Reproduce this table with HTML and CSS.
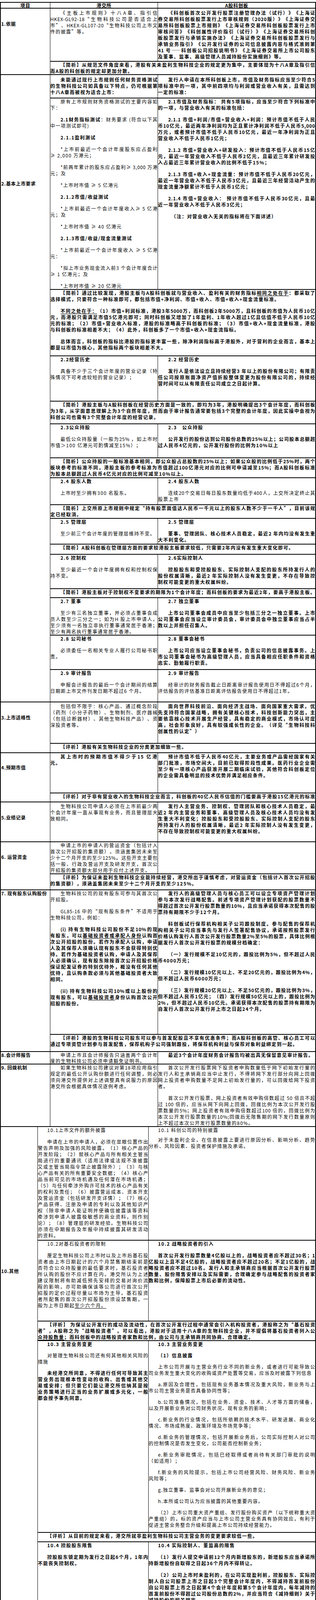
FILE: index.html
```html
<!DOCTYPE html>
<html lang="zh-CN">
<head>
<meta charset="utf-8">
<title>港交所与A股科创板比较</title>
<link rel="stylesheet" href="styles.css">
</head>
<body>
<div class="page">
<div class="grid ga">
  <div class="hd">项目</div><div class="hd">港交所</div><div class="hd">A股科创板</div>

  <div class="lb s2 p31">1.依据</div>
  <div class="c pt3"><p><span>《主板上市规则》十八A章、指引信</span><span>HKEX-GL92-18“生物科技公司是否适合上</span><span>市”、HKEX-GL107-20“生物科技公司上市文</span><span class="z">件的披露”等。</span></p></div>
  <div class="c pt3 bd"><p><span>《科创板首次公开发行股票注册管理办法（试行）》《上海证</span><span>券交易所科创板股票发行上市审核规则（2020版）》《上海证券交</span><span>易所科创板股票上市规则》《上海证券交易所科创板股票发行上市</span><span>审核问答》《科创属性评价指引（试行）》《上海证券交易所科创</span><span>板股票发行与承销实施办法》《上海证券交易所科创板股票发行与</span><span>承销业务指引》《公开发行证券的公司信息披露内容与格式准则第</span><span>41 号——科创板公司招股说明书》《上海证券交易所上市公司股东</span><span class="z">及董事、监事、高级管理人员减持股份实施细则》等。</span></p></div>
  <div class="c an w2"><p><span>【简析】从规范文件角度来看，港股有关未盈利生物科技企业的规定更为集中，主要体现为十八A章及指引信</span><span class="z">而A股的科创板的规定却更加分散。</span></p></div>

  <div class="lb s16 p270">2.基本上市要求</div>
  <div class="c pt4 bd"><p><span>未能通过现行上市规则任何财务资格测试</span><span>的生物科技公司如具备以下特点，仍可根据第</span><span class="z">十八A章而被视为适合上市：</span></p></div>
  <div class="c pt4 bd"><p><span>发行人申请在本所科创板上市，市值及财务指标应当至少符合5</span><span>项标准中的一项，其中前四项均与利润或营业收入有关，且需达到</span><span class="z">一定的标准：</span></p></div>

  <div class="c">
    <p><span>原有上市规则财务资格测试的主要内容如</span><span class="z">下：</span></p>
    <p><span><b>2.1财务指标测试</b>：财务要求 (符合以下其</span><span class="z">中一项测试即可)</span></p>
    <p><b>2.1.1盈利测试</b></p>
    <p><span>*上市前最近一个会计年度股东应占盈利</span><span class="z">≥ 2,000 万港元；</span></p>
    <p><span>*前两年累计的股东应占盈利≥ 3,000 万港</span><span class="z">元；及</span></p>
    <p>*上市时市值 ≥ 5 亿港元</p>
    <p><b>2.1.2市值/收益测试</b></p>
    <p><span>*上市前最近一个会计年度收入≥ 5 亿港</span><span class="z">元；及</span></p>
    <p>*上市时市值 ≥ 40 亿港元</p>
    <p><b>2.1.3市值/收益/现金流量测试</b></p>
    <p><span>*上市前最近一个会计年度收入 ≥ 5 亿港</span><span class="z">元：</span></p>
    <p><span>*拟上市业务现金流入前3 个会计年度合计</span><span class="z">≥ 1 亿港元；及</span></p>
    <p>*上市时市值 ≥ 20 亿港元</p>
  </div>
  <div class="c bd">
    <p><span>2.1市值及财务指标： 共有5项指标，应当至少符合下列标准中</span><span class="z">的一项，与营业收入有关的标准包括：</span></p>
    <p><span>2.1.1 市值+利润/市值+营业收入+利润：预计市值不低于人民</span><span>币10亿元，最近两年净利润均为正且累计净利润不低于人民币5,000</span><span>万元，或者预计市值不低于人民币10亿元，最近一年净利润为正且</span><span class="z">营业收入不低于人民币1亿元；</span></p>
    <p><span>2.1.2 市值+营业收入+研发投入：预计市值不低于人民币15亿</span><span>元，最近一年营业收入不低于人民币2亿元，且最近三年累计研发投</span><span class="z">入占最近三年累计营业收入的比例不低于15%；</span></p>
    <p><span>2.1.3 市值+收入+现金流量：预计市值不低于人民币20亿元，</span><span>最近一年营业收入不低于人民币3亿元，且最近三年经营活动产生的</span><span class="z">现金流量净额累计不低于人民币1亿元；</span></p>
    <p><span>2.1.4 市值+营业收入： 预计市值不低于人民币30亿元，且最</span><span class="z">近一年营业收入不低于人民币3亿元；</span></p>
    <p class="note">（注：对营业收入无关的指标将在下面详述）</p>
  </div>

  <div class="c an w2">
    <p><span>【简析】通过比较发现，港股主板与A股科创板就与营业收入、盈利有关的财务指标<u>相同之处在于</u>：都采取了</span><span class="z">选择模式，只要符合一种标准即可，都包括市值+净利润、市值+收入、市值+收入+现金流量标准。</span></p>
    <p><span><u>不同之处在于：</u>（1）市值+利润标准，港股3年5000万，而科创板2年5000万，且科创板的市值为人民币10亿</span><span>元，而港股只需满足市值5亿港元即可；同时科创板又增加了1年盈利、1年收入超过1亿且估值不低于人民币10亿</span><span>元的标准；（2）市值+营业收入标准，港股的标准略高于科创板的标准；（3）市值+收入+现金流量标准，港股</span><span class="z">与科创板的标准相差不大；（4）此外，科创板多了一个市值+收入+现金流指标。</span></p>
    <p><span>总体而言，科创板的指标比港股的指标更丰富一些，除净利润指标高于港股外，对于营利的企业而言，基本上</span><span class="z">都是以市值为核心，其他指标两个板块相差不大。</span></p>
  </div>

  <div class="c"><p><b>2.2经营历史</b></p><p><span>具备不少于三个会计年度的营业记录（特</span><span class="z">殊情况下可考虑较短的营业记录）；</span></p></div>
  <div class="c bd"><p>2.2 经营历史</p><p><span>发行人是依法设立且持续经营3 年以上的股份有限公司；有限责</span><span>任公司按原账面净资产值折股整体变更为股份有限公司的，持续经</span><span class="z">营时间可以从有限责任公司成立之日起计算。</span></p></div>
  <div class="c an w2"><p><span>【简析】港股主板与A股科创板在经营历史方面是一致的，即均为3年，港股明确提出3个会计年度，而科创板</span><span>为3年，从字面意思理解上为3个自然年度，然而由于审计报告通常要包括3个完整的会计年度，因此实操中会视为</span><span class="z">科创公司也需有3个完整会计年度的经营记录。</span></p></div>

  <div class="c"><p><b>2.3公众持股</b></p><p><span>最低公众持股量（一般为25% ，如上市时</span><span class="z">市值＞100 亿港元可酌情减至15%）；</span></p></div>
  <div class="c bd"><p>2.3　公众持股</p><p><span>公开发行的股份达到公司股份总数的25%以上；公司股本总额超</span><span class="z">过人民币4亿元的，公开发行股份的比例为10%以上</span></p></div>
  <div class="c an w2"><p><span>【简析】公众持股的一般标准基本相同，即公众股占总股数的25%以上；如果公众股的比例低于25%时，两个</span><span>板块参考的标准不同，港股主板的参考标准为市值超过100亿港元对应的比例可申请减至15%；而A股科创板标准</span><span class="z">为股本总额超过人民币4亿元对应的比例可减至10%以上。</span></p></div>

  <div class="c"><p><b>2.4 股东人数</b></p><p>上市时至少拥有300 名股东。</p></div>
  <div class="c"><p><b>2.4 股东人数</b></p><p><span>连续20个交易日每日股东数量均低于400人，上交所决定终止其</span><span class="z">股票上市</span></p></div>
  <div class="c an w2"><p><span>【简析】上交所原上市规则中规定“持有股票面值达人民币一千元以上的股东人数不少于一千人”，目前该规</span><span class="z">定已经取消。</span></p></div>

  <div class="c"><p><b>2.5 管理层</b></p><p>至少前三个会计年度的管理层维持不变。</p></div>
  <div class="c bd"><p>2.5 管理层</p><p><span>董事、管理团队、核心技术人员稳定，最近2 年内均没有发生重</span><span class="z">大不利变化。</span></p></div>
  <div class="c an w2"><p>【简析】A股科创板在管理层方面的要求较港股主板要求较低，只需要2年内没有发生重大变化即可。</p></div>

  <div class="c"><p><b>2.6 控制权</b></p><p><span>至少最近一个会计年度拥有权和控制权保</span><span class="z">持不变。</span></p></div>
  <div class="c bd"><p>2.6实际控制人</p><p><span>控股股东和受控股股东、实际控制人支配的股东所持发行人的</span><span>股份权属清晰，最近2 年实际控制人没有发生变更，不存在导致控</span><span class="z">制权可能变更的重大权属纠纷。</span></p></div>
  <div class="c an w2"><p><span>【简析】港股主板对于控制权不变要求的期限为1个会计年度；而科创板的要求为最近2年，要高于港股主板。</span></p></div>

  <div class="c"><p><b>2.7 董事</b></p><p><span>至少有三名独立董事，并必须占董事会成</span><span>员人数至少三分之一；如为H 股上市申请人，</span><span>至少须有一名独立非执行董事通常居于香港；</span><span class="z">至少有两名执行董事通常居于香港。</span></p></div>
  <div class="c bd"><p>2.7 独立董事</p><p><span>上市公司董事会成员中应当至少包括三分之一独立董事。上市</span><span>公司董事会应当设立审计委员会，审计委员会中独立董事应当占半</span><span class="z">数以上并担任召集人。</span></p></div>

  <div class="c"><p><b>2.8 公司秘书</b></p><p><span>必须委任一名相关专业人履行公司秘书职</span><span class="z">责。</span></p></div>
  <div class="c bd"><p>2.8 董事会秘书</p><p><span>上市公司应当设立董事会秘书，负责公司的信息披露事务。上</span><span>市公司董事会秘书为高级管理人员，应当具备相应任职条件和资格</span><span class="z">忠实、勤勉履行职责。</span></p></div>

  <div class="c"><p><b>2.9 审计报告</b></p><p><span>申报会计报告的最后一个会计期间的结算</span><span class="z">日期距上市文件刊发日期不超过6 个月。</span></p></div>
  <div class="c"><p><b>2.9 审计报告</b></p><p><span>经审计的财务报告截止日距离审计报告使用日不得超过6个月，</span><span class="z">评估报告的评估基准日距离评估报告使用日不得超过1年。</span></p></div>

  <div class="lb s2 p31">3.上市适格性</div>
  <div class="c pt2"><p><span>包括但不限于：核心产品、通过概念阶段</span><span>（药剂（小分子药物）、生物制剂、医疗器械</span><span>（包括诊断器材）、其他生物科技产品）、资</span><span class="z">深投资者等。</span></p></div>
  <div class="c pt2 bd"><p><span>面向世界科技前沿、面向经济主战场、面向国家重大需求。优</span><span>先支持符合国家战略，拥有关键核心技术，科技创新能力突出，主</span><span>要依靠核心技术开展生产经营，具有稳定的商业模式，市场认可度</span><span>高，社会形象良好，具有较强成长性的企业。（详见“生物科技科</span><span class="z">创属性的认定”）</span></p></div>
  <div class="c an w2"><p>【评析】港股有关生物科技企业的分类更加细致一些。</p></div>

  <div class="lb s2 p29">4.预期市值</div>
  <div class="c pt1 bd"><p>其上市时的预期市值不得少于15 亿港元。</p></div>
  <div class="c pt1 bd"><p><span>预计市值不低于人民币40亿元，主要业务或产品需经国家有关</span><span>部门批准，市场空间大，目前已取得阶段性成果。医药行业企业需</span><span>至少有一项核心产品获准开展二期临床试验，其他符合科创板定位</span><span class="z">的企业需具备明显的技术优势并满足相应条件。</span></p></div>
  <div class="c an w2"><p><span>【评析】对于非有营业收入的生物科技企业而言，科创板的40亿人民币估值的门槛要高于港股15亿港元的标准</span></p></div>

  <div class="lb p31">5.业绩记录</div>
  <div class="c pt2"><p><span>生物科技公司申请人必须在上市前最少两</span><span>个会计年度一直从事现有业务，而且管理层大</span><span class="z">致相同。</span></p></div>
  <div class="c pt2 bd"><p><span>发行人主营业务、控制权、管理团队和核心技术人员稳定，最</span><span>近2 年内主营业务和董事、高级管理人员及核心技术人员均没有发</span><span>生重大不利变化；控股股东和受控股股东、实际控制人支配的股东</span><span>所持发行人的股份权属清晰，最近2 年实际控制人没有发生变更，</span><span class="z">不存在导致控制权可能变更的重大权属纠纷。</span></p></div>

  <div class="lb s2 p30">6. 运营资金</div>
  <div class="c"><p><span>申请上市的申请人的营运资金（包括计入</span><span>首次公开招股的集资额），须涵盖集团未来至</span><span>少十二个月开支的至少125%。这些开支主要包</span><span>括一般、行政及营运开支及研发开支，首次公</span><span class="z">开招股的集资额大部分用于应付上述开支。</span></p></div>
  <div class="c"></div>
  <div class="c an w2"><p><span>【评析】为保证未盈利生物科技企业能持续经营，港交所出于谨慎考虑，对营运资金（包括计入首次公开招股</span><span class="z">的集资额），须涵盖集团未来至少十二个月开支的至少125%。</span></p></div>

  <div class="lb s2">7. 现有股东认购股份</div>
  <div class="c">
    <p><span>生物科技公司的现有股东可参与其首次公</span><span class="z">开招股。</span></p>
    <p><span>GL85-16 中的“现有股东条件”不适用于</span><span class="z">生物科技公司，例如：</span></p>
    <p class="bd"><span>(i) 持有生物科技公司股份不足10%的现</span><span>有股东，可以<u>基础投资者或承配人身份</u>认购首</span><span>次公开招股的股份。若作为承配人认购，申请</span><span>人及其保荐人须确认现有股东不会获得特别优</span><span>待。若作为基础投资者认购，申请人及其保荐</span><span>人必须确认，现有股东除按首次公开招股价格</span><span>保证配发证券的特别优待外，概没有任何其他</span><span>优待，且认购条款必须与其他基础投资者大致</span><span class="z">相同。</span></p>
    <p class="bd"><span>(ii) 持有生物科技公司10%或以上股份的</span><span>现有股东，可以<u>基础投资者</u>身份认购首次公开</span><span class="z">招股的股份。</span></p>
  </div>
  <div class="c bd">
    <p><span>发行人的高级管理人员与核心员工可以设立专项资产管理计划</span><span>参与本次发行战略配售。前述专项资产管理计划获配的股票数量不</span><span>得超过首次公开发行股票数量的10%，且应当承诺获得本次配售的股</span><span class="z">票持有期限不少于12个月。</span></p>
    <p><span>科创板试行保荐机构相关子公司跟投制度。参与配售的保荐机</span><span>构相关子公司应当事先与发行人签署配售协议，承诺按照股票发行</span><span>价格认购发行人首次公开发行股票数量2%至5%的股票，具体比例根</span><span class="z">据发行人首次公开发行股票的规模分档确定：</span></p>
    <p><span>（一）发行规模不足10亿元的，跟投比例为5%，但不超过人民</span><span class="z">币4000万元；</span></p>
    <p><span>（二）发行规模10亿元以上、不足20亿元的，跟投比例为4%，</span><span class="z">但不超过人民币6000万元；</span></p>
    <p><span>（三）发行规模20亿元以上、不足50亿元的，跟投比例为3%，</span><span>但不超过人民币1亿元；（四）发行规模50亿元以上的，跟投比例为</span><span>2%，但不超过人民币10亿元。承诺获得本次配售的股票持有期限为</span><span class="z">自发行人首次公开发行并上市之日起24个月。</span></p>
  </div>
  <div class="c an w2"><p><span>【评析】港股的生物科技公司股东可以参与首发配股且不享有优惠条件；而A股科创板的高管、核心员工可以</span><span class="z">通过专项资管计划参与首发配售，保荐机构子公司强制跟投，将保荐机构利益与保荐对象利益绑定到一起。</span></p></div>

  <div class="lb lh15">8.会计师报告</div>
  <div class="c lh15"><p><span>申请上市且会计师报告只涵盖两个会计年</span><span class="z">度的生物科技公司必须申请豁免证明书。</span></p></div>
  <div class="c lh15 bd"><p>最近3个会计年度财务会计报告均被出具无保留意见审计报告。</p></div>

  <div class="lb">9. 回拨机制</div>
  <div class="c"><p><span>如果生物科技公司建议对第18项应用指引</span><span>规定的最低公开认购份额进行任何调整，则必</span><span>须向港交所提供对上述调整具有说服力的原因</span><span class="z">港交所会根据具体情况逐例考虑。</span></p></div>
  <div class="c">
    <p><span>首次公开发行股票网下投资者申购数量低于网下初始发行量的</span><span>发行人和主承销商应当中止发行，不得将网下发行部分向网上回拨</span><span>网上投资者申购数量不足网上初始发行量的，可以回拨给网下投资</span><span class="z">者。</span></p>
    <p><span>首次公开发行股票，网上投资者有效申购倍数超过 50 倍且不超</span><span>过 100 倍的，应当从网下向网上回拨，回拨比例为本次公开发行股</span><span>票数量的5%；网上投资者有效申购倍数超过100 倍的，回拨比例为</span><span>本次公开发行股票数量的10%;回拨后无限售期的网下发行数量原则</span><span class="z">上不超过本次公开发行股票数量的80%。</span></p>
  </div>
</div>

<div class="grid gb">
  <div class="lb s7 p361">10.其他</div>
  <div class="c">
    <p>10.1上市文件的额外披露</p>
    <p><span>申请在上市的申请人，必须在显眼位置作出</span><span>警告声明及加强的风险披露。（1）核心产品的</span><span>开发阶段；（2）就核心产品与所有相关主管当</span><span>局进行的重要通讯（适用法律或法规不准披露</span><span>又或主管当局指令禁止披露除外）；（3）与核</span><span>心产品有关的所有重要安全数据；（4）核心产</span><span>品当前可见的市场机遇及任何潜在市场机遇；</span><span>（5）与任何牵涉外购许可技术的核心产品有关</span><span>的权利及责任；（6）披露营运成本、资本开支</span><span>及营运资金（包括研发开支详情）；（7）核心</span><span>产品获得、注册及申请的专利以及其他知识产</span><span>权（除非申请人能证明并使确信披露该等资料</span><span>牵涉到申请人披露极敏感的商业资料，则作别</span><span>论）；（8）管理层的研发经验。生物科技公司</span><span>亦须在中期报告及年报中持续披露其研发活动</span><span class="z">的资料。</span></p>
  </div>
  <div class="c">
    <p>10.1 科创公司的特别披露</p>
    <p class="tight"><span>对于未盈利企业，在信息披露上要进行原因分析、影响分析、趋势</span><span class="z">分析、风险因素、投资者保护措施及承诺。</span></p>
  </div>

  <div class="c">
    <p>10.2对基石投资者的限制</p>
    <p><span>厘定生物科技公司上市时以及上市后基石投</span><span>资者由上市日期起计的六个月禁售期结束前是</span><span>否符合公众持股量的最低要求时，基石投资者</span><span>所认购的股份不应计算在内。港交所认为上述</span><span>建议限制将有助减低预先安排的交易对询价流</span><span>程的影响，亦可助确保该等公司进行首次公开</span><span>招股的定价过程尽量以市场为主导。基石投资</span><span>者所配售的首次公开招股股份须设禁售期，一</span><span class="z">般为上市日期起<u>至少六个月。</u></span></p>
  </div>
  <div class="c bd">
    <p>10.2 战略投资者的引入</p>
    <p><span>首次公开发行股票数量4亿股以上的，战略投资者应不超过30名；1</span><span>亿股以上且不足4亿股的，战略投资者应不超过20名；不足1亿股的，战</span><span>略投资者应不超过10名。发行人和主承销商应当根据首次公开发行股票</span><span>数量、股份限售安排以及实际需要，合理确定参与战略配售的投资者家</span><span class="z">数和比例，保障股票上市后必要的流动性。</span></p>
  </div>
  <div class="c an w2"><p><span>【评析】 为保证公开发行的成功及流动性，在首次公开发行过程中通常会引入机构投资者，港股称之为“基石投资</span><span>者”，A股称之为“战略投资者”。可以看出，港股对于适用十八A章的生物科技企业，并不提倡将基石投资者列入公</span><span class="z"><u>众持股数量</u>；而科创板中的战略投资者家数和比例，由公司与主承销商共同协商、合理确定。</span></p></div>

  <div class="c g13">
    <p><b>10.3 主营业务变更</b></p>
    <p><span>对管理生物科技公司还有何其他相关风险的</span><span class="z">措施</span></p>
    <p class="bd"><span>未经港交所同意，不得进行任何可导致其主</span><span>营业务出现根本性变动的收购、出售或其他交</span><span>易或安排；但只要它们能让港交所信纳其是按</span><span>业务策略进行正当的业务扩展或多元化，一般</span><span class="z">都会授予事先同意。</span></p>
  </div>
  <div class="c g13">
    <p><b>10.3 主营业务变更</b></p>
    <p><b>（1）信息披露</b></p>
    <p><span>上市公司开展与主营业务行业不同的新业务，或者进行可能导致公</span><span class="z">司业务发生重大变化的收购或资产处置等交易，应当及时披露下列信息</span></p>
    <p><span>a.原因及合理性，包括现有业务基本情况及重大风险，新业务与上</span><span class="z">市公司主营业务是否具备协同性等；</span></p>
    <p><span>b.公司准备情况，包括在业务、资金、技术、人才等方面的储备，</span><span class="z">以及开展新业务对公司财务状况、现有业务的影响；</span></p>
    <p><span>c.新业务的行业情况，包括所依赖的技术水平、研发进展、商业化</span><span class="z">情况、市场成熟度、政策环境及市场竞争等；</span></p>
    <p><span>d.新业务的管理情况，包括开展新业务后，公司实际控制人对公司</span><span class="z">的控制情况是否发生变化，公司能否控制新业务；</span></p>
    <p><span>e.新业务审批情况，包括已经取得或者尚待有关部门审批的说明</span><span class="z">（如适用）；</span></p>
    <p><span>f.新业务的风险提示，包括上市公司经营风险、财务风险、新业务</span><span class="z">风险等；</span></p>
    <p>g.独立董事、监事会对公司开展新业务的意见；</p>
    <p>h.本所或公司认为应当披露的其他重要内容。</p>
    <p><span>（2）上市公司重大资产重组、发行股份购买资产（以下统称重大资</span><span>产重组）的，标的资产应当与上市公司主营业务具有协同效应，有利于</span><span class="z">促进主营业务整合升级和提高上市公司持续经营能力。</span></p>
  </div>
  <div class="c an w2"><p>【评析】从目前的规定来看，港交所就非盈利生物科技公司主营业务的变更要求较低一些。</p></div>

  <div class="c">
    <p><b>10.4 控股股东限售</b></p>
    <p class="bd"><span>控股股东锁定期为发行之日起6个月，1年内</span><span class="z">不能丧失控制权。</span></p>
  </div>
  <div class="c">
    <p><b>10.4 实际控制人、董监高的限售</b></p>
    <p class="bd"><span>（1）发行人提交申请前12个月内新增股东的，新增股东应当承诺所</span><span class="z">持新增股份自取得之日起36个月内不得转让。</span></p>
    <p class="bd"><span>（2）公司上市时未盈利的，在公司实现盈利前，控股股东、实际控</span><span>制人自公司股票上市之日起3个完整会计年度内，不得减持首发前股份</span><span>自公司股票上市之日起第4个会计年度和第5个会计年度内，每年减持的</span><span>首发前股份不得超过公司股份总数的2%，并应当符合《减持细则》关于</span><span class="z">减持股份的相关规定。</span></p>
    <p><span><u>公司上市时未盈利</u>的，在公司实现盈利前，董事、监事、高级管理</span><span>人员及核心技术人员自公司股票上市之日起3个完整会计年度内，不得</span><span class="z">减持首发前股份；在前述期间内离职的，应当继续遵守本款规定。</span></p>
    <p><span><u>公司实现盈利后</u>，前两款规定的股东可以自当年年度报告披露后次</span><span class="z">日起减持首发前股份，但应当遵守本节其他规定。</span></p>
    <p><span>（3）上市公司<u>控股股东、实际控制人</u>减持本公司首发前股份的，自</span><span>公司股票上市之日起36个月内，不得转让或者委托他人管理其直接和间</span><span class="z">接持有的首发前股份，也不得提议由上市公司回购该部分股份；</span></p>
    <p><span>采取集中交易方式：在任意连续九十个自然日内，减持股份的总数</span><span class="z">不得超过公司股份总数的百分之一。</span></p>
    <p><span>采取大宗交易方式：在任意连续九十个自然日内，减持股份的总数</span><span class="z">不得超过公司股份总数的百分之二。</span></p>
    <p>（4）<u>董监高</u></p>
    <p><span>公司上市时未盈利的，在公司实现盈利前，董事、监事、高级管理</span><span>人员及核心技术人员自公司股票上市之日起3个完整会计年度内，不得</span><span class="z">减持首发前股份；在前述期间内离职的，应当继续遵守本款规定。</span></p>
    <p><span>公司实现盈利后，前两款规定的股东可以自当年年度报告披露后次</span><span class="z">日起减持首发前股份。</span></p>
    <p>（5）<u>核心技术人员</u></p>
    <p><span>自公司股票上市之日起12个月内和离职后6个月内不得转让本公司首</span><span class="z">发前股份；</span></p>
    <p><span>自所持首发前股份限售期满之日起4年内，每年转让的首发前股份不</span><span>得超过上市时所持公司首发前股份总数的25%，减持比例可以累积使用</span></p>
  </div>
  <div class="c an w2 lh15"><p><span>【评析】 港股仅对控股股东有限售期的要求；而科创板对于递交资料前1年引入的投资人、控股股东、实际控制人</span><span>董监高、核心技术人员均有限售期的要求，尤其对于非盈利的企业，控股股东、实际控制人、董监高在公司盈利前均有</span><span class="z">更高的要求。</span></p></div>
</div>
</div>
</body>
</html>
```

FILE: styles.css
```css
* {
  box-sizing: border-box;
}

body {
  margin: 0;
  background: #ffffff;
  color: #000000;
  font-family: "Noto Sans CJK SC", "Noto Sans", sans-serif;
  font-size: 12px;
  line-height: 16px;
  letter-spacing: 0.7px;
  text-spacing-trim: space-all;
  text-autospace: no-autospace;
}

.page {
  width: 810px;
  padding-top: 5px;
}

/* the black background shows through the gaps as the ruling lines */
.grid {
  display: grid;
  width: 810px;
  background: #000;
  column-gap: 1px;
  row-gap: 2px;
  padding: 2px;
}

.ga {
  grid-template-columns: 126px 275px 403px;
  grid-template-rows:
    13px 134px 32px
    58px 488px 168px 114px 56px 85px 49px 67px 33px 64px 24px 86px 21px 94px 86px 81px
    104px 22px
    101px 21px
    100px
    80px 39px
    368px 42px
    30px
    158px;
}

.gb {
  padding-top: 0;
  grid-template-columns: 94px 283px 427px;
  grid-template-rows: 289px 205px 48px 489px 22px 681px 45px;
}

.hd,
.lb,
.c {
  background: #fff;
  min-width: 0;
  min-height: 0;
}

.hd {
  font-weight: 700;
  text-align: center;
  line-height: 13px;
}

.lb {
  grid-column: 1;
  font-weight: 700;
  padding-left: 1px;
  text-align: left;
}

.s2 { grid-row: span 2; }
.s7 { grid-row: span 7; }
.s16 { grid-row: span 16; }

.w2 {
  grid-column: 2 / 4;
}

.c {
  text-align: justify;
}

/* paragraphs: first line indented, each visual line is its own block */
.c p {
  margin: 0;
  text-indent: 26px;
  letter-spacing: 1.5px;
}

.gb .c p {
  text-indent: 24px;
}

.c p > span {
  display: block;
  height: 16px;
  overflow: clip;
  overflow-clip-margin: 3px;
  text-indent: 0;
  letter-spacing: 0.7px;
  text-align: justify;
  text-align-last: justify;
}

.c p > span:first-child {
  text-indent: 26px;
}

.gb .c p > span:first-child {
  text-indent: 24px;
}

.c p > span.z {
  letter-spacing: 1.5px;
  text-align-last: left;
}

.c p + p {
  margin-top: 14px;
}

.g13 p + p {
  margin-top: 13px;
}

.c p + p.tight {
  margin-top: 9px;
}

.c p.note {
  text-indent: 34px;
}

u {
  text-decoration: underline;
  text-underline-offset: 2px;
}

.bd,
.an {
  font-weight: 700;
}

.lh15,
.lh15 p {
  line-height: 15px;
}

.c.lh15 p > span {
  height: 15px;
}

.pt1 { padding-top: 1px; }
.pt2 { padding-top: 2px; }
.pt3 { padding-top: 3px; }
.pt4 { padding-top: 4px; }
.p29 { padding-top: 29px; }
.p30 { padding-top: 30px; }
.p31 { padding-top: 31px; }
.p270 { padding-top: 270px; }
.p361 { padding-top: 361px; }
```
